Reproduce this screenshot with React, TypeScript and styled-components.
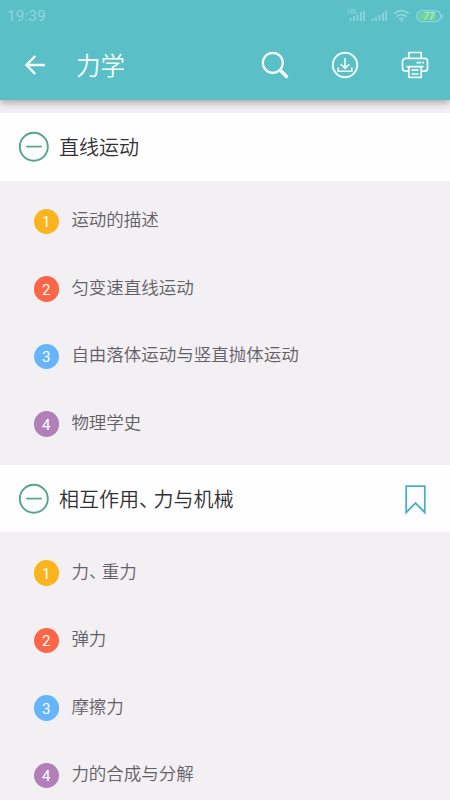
import React from 'react';
import styled, { createGlobalStyle } from 'styled-components';

const GlobalStyle = createGlobalStyle`
  * { box-sizing: border-box; }
  body { margin: 0; background: #f2f0f2; }
`;

const Screen = styled.div`
  width: 450px;
  height: 800px;
  overflow: hidden;
  background: #f2f0f2;
  font-family: Roboto, "Noto Sans CJK SC", sans-serif;
  font-weight: 350;
`;

const Top = styled.header`
  position: relative;
  height: 100px;
  background: #5abfc6;
  box-shadow: 0 2px 8px rgba(0, 0, 0, 0.36);
`;

const StatusBar = styled.div`
  display: flex;
  align-items: center;
  justify-content: space-between;
  height: 30px;
  padding: 1px 6px 0 7px;
  color: #8cd8de;
  font-size: 15.5px;
  font-weight: 400;
`;

const StatusIcons = styled.svg`
  display: block;
  width: 98px;
  height: 18px;
`;

const Toolbar = styled.div`
  display: flex;
  align-items: center;
  height: 70px;
  padding: 0 20px;
`;

const IconButton = styled.button`
  display: block;
  width: 30px;
  height: 30px;
  padding: 0;
  border: 0;
  background: none;
  color: #f4ffff;
  svg { display: block; }
`;

const Title = styled.h1`
  flex: 1;
  margin: 3px 0 0 26px;
  color: #f6ffff;
  font-size: 24.5px;
  line-height: 36px;
  font-weight: 350;
`;

const Actions = styled.div`
  display: flex;
  gap: 40px;
`;

const Content = styled.main`
  padding-top: 13.4px;
`;

const Section = styled.section`
  margin-bottom: 14px;
`;

const SectionHeader = styled.div`
  display: flex;
  align-items: center;
  height: 67.5px;
  padding: 0 20px 0 18px;
  background: #fefefe;
`;

const SectionTitle = styled.h2`
  flex: 1;
  margin: 2px 0 0 9px;
  color: #303034;
  font-size: 20px;
  line-height: 30px;
  font-weight: 350;
`;

const Row = styled.div`
  display: flex;
  align-items: center;
  height: 67.5px;
  padding: 14px 0 0 33.6px;
`;

const Badge = styled.span<{ $color: string }>`
  display: flex;
  align-items: center;
  justify-content: center;
  width: 25.4px;
  height: 25.4px;
  padding-top: 1px;
  border-radius: 50%;
  background: ${({ $color }) => $color};
  color: #fff;
  font-size: 15px;
  font-weight: 400;
`;

const RowText = styled.span`
  margin: -3px 0 0 12.4px;
  color: #626066;
  font-size: 17.5px;
  line-height: 26px;
`;

const Comma = styled.span`
  letter-spacing: -0.27em;
`;

const Label = ({ text }: { text: string }) => (
  <>
    {text.split('、').map((part, i) => (
      <React.Fragment key={i}>
        {i > 0 && <Comma>、</Comma>}
        {part}
      </React.Fragment>
    ))}
  </>
);

const BackIcon = () => (
  <svg width="30" height="30" viewBox="0 0 30 30" fill="none" stroke="currentColor" strokeWidth="2.5">
    <path d="M25 15H7M15.2 6 6.5 15l8.700 9" />
  </svg>
);

const SearchIcon = () => (
  <svg width="30" height="30" viewBox="0 0 30 30" fill="none" stroke="currentColor">
    <circle cx="12.8" cy="12.8" r="10" strokeWidth="2.2" />
    <path d="m20 20 1.5 1.5" strokeWidth="2.2" />
    <path d="m21.500 21.500 5 5" strokeWidth="3.5" strokeLinecap="round" />
  </svg>
);

const DownloadIcon = () => (
  <svg width="30" height="30" viewBox="0 0 30 30" fill="none" stroke="currentColor">
    <circle cx="15" cy="15" r="12.2" strokeWidth="2" />
    <path d="M15 8v10M10.8 14.2l4.2 4.2 4.2-4.2M8.2 17.5v3.8h13.6v-3.8" strokeWidth="1.6" />
  </svg>
);

const PrintIcon = () => (
  <svg width="30" height="30" viewBox="0 0 30 30" fill="none" stroke="currentColor" strokeWidth="1.7">
    <path d="M8.8 8.3V2.5h12.4v5.8M8.3 21.2H5.5a3 3 0 0 1-3-3v-6.8a3 3 0 0 1 3-3h19a3 3 0 0 1 3 3v6.8a3 3 0 0 1-3 3h-2.8" />
    <path d="M6.5 16.6h17M8.8 16.6v10.7h12.4V16.6M11.5 20.2h7M11.5 24h7" />
    <path d="M16.5 12.6h4.7M22.3 12.6h1.6" />
  </svg>
);

const MinusIcon = () => (
  <svg width="32" height="32" viewBox="0 0 32 32" fill="none" stroke="#54a58d">
    <circle cx="15.8" cy="15.8" r="14" strokeWidth="1.9" />
    <path d="M8.2 15.6h15.600" strokeWidth="1.7" />
  </svg>
);

const BookmarkIcon = () => (
  <svg width="30" height="32" viewBox="0 0 30 32" fill="none" stroke="#49adcc" strokeWidth="1.8">
    <path d="M6.2 3.2h18.6v26.3L15.5 20l-9.3 9.5z" />
  </svg>
);

const SignalIcons = () => (
  <StatusIcons viewBox="346 6 98 18" fill="none" stroke="#8cd8de">
    <text x="347.5" y="13" fontSize="6.5" fontWeight="500" fill="#8cd8de" stroke="none">HD</text>
    <path d="M350.5 20v-3M354 20v-5M357.5 20v-6.5M361 20v-9M364 20V9.5" strokeWidth="1.7" />
    <path d="M372.5 20v-2.5M376 20v-4M379.5 20v-6M383 20v-8M386 20V9.5" strokeWidth="1.7" />
    <path d="M394 12.7q7.5-6 15 0M396.6 15.6q4.9-4 9.8 0M399.2 18.2q2.3-1.8 4.6 0" strokeWidth="1.7" />
    <circle cx="401.5" cy="20" r="1" fill="#8cd8de" stroke="none" />
    <rect x="416.7" y="9.7" width="24" height="11" rx="5.5" strokeWidth="1.3" />
    <rect x="418.5" y="11.4" width="18" height="7.6" rx="3.8" fill="#72d49b" stroke="none" />
    <path d="M442.5 13.5v3.5" strokeWidth="1.3" />
    <text x="423.5" y="18.8" fontSize="10" fontWeight="400" fontStyle="italic" fill="#b8f2dd" stroke="none">77</text>
  </StatusIcons>
);

const colors = ['#fbb41d', '#fb6548', '#66b5fa', '#b17fb9'];

const sections = [
  {
    title: '直线运动',
    marked: false,
    items: ['运动的描述', '匀变速直线运动', '自由落体运动与竖直抛体运动', '物理学史'],
  },
  {
    title: '相互作用、力与机械',
    marked: true,
    items: ['力、重力', '弹力', '摩擦力', '力的合成与分解'],
  },
];

export default function App() {
  return (
    <Screen>
      <GlobalStyle />
      <Top>
        <StatusBar>
          <span>19:39</span>
          <SignalIcons />
        </StatusBar>
        <Toolbar>
          <IconButton aria-label="返回"><BackIcon /></IconButton>
          <Title>力学</Title>
          <Actions>
            <IconButton aria-label="搜索"><SearchIcon /></IconButton>
            <IconButton aria-label="下载"><DownloadIcon /></IconButton>
            <IconButton aria-label="打印"><PrintIcon /></IconButton>
          </Actions>
        </Toolbar>
      </Top>
      <Content>
        {sections.map((section) => (
          <Section key={section.title}>
            <SectionHeader>
              <MinusIcon />
              <SectionTitle><Label text={section.title} /></SectionTitle>
              {section.marked && <BookmarkIcon />}
            </SectionHeader>
            {section.items.map((item, i) => (
              <Row key={item}>
                <Badge $color={colors[i]}>{i + 1}</Badge>
                <RowText><Label text={item} /></RowText>
              </Row>
            ))}
          </Section>
        ))}
      </Content>
    </Screen>
  );
}
